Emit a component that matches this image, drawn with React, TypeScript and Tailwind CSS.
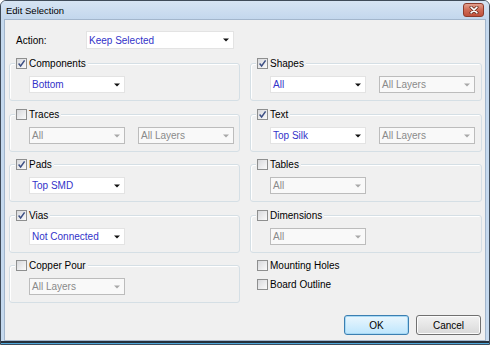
import React from "react";

const Check = ({ on }: { on?: boolean }) => (
  <span className="flex h-[11px] w-[11px] shrink-0 items-center justify-center border border-[#8e8f8f] bg-gradient-to-br from-[#d8d9dc] to-[#fafafa]">
    {on && (
      <svg width="9" height="9" viewBox="0 0 9 9">
        <path d="M1.6 4.6 L3.6 7 L7.6 1.4" fill="none" stroke="#3c4f84" strokeWidth="1.5" />
      </svg>
    )}
  </span>
);

const Combo = ({ value, off, wide }: { value: string; off?: boolean; wide?: boolean }) => (
  <div
    className={`flex h-[17px] items-center justify-between border pl-[2px] pr-[4px] ${wide ? "h-[18px] w-[148px]" : "w-[96px]"} ${
      off ? "border-[#bcbcbc] bg-[#f9f9f9] text-[#8a8a8a]" : "border-[#e3e3e3] bg-white text-[#3333c9]"
    }`}
  >
    <span>{value}</span>
    <svg width="6" height="4" viewBox="0 0 6 4">
      <path d="M0 0.5h6L3 3.5z" fill={off ? "#a8a8a8" : "#111"} />
    </svg>
  </div>
);

const Group = ({ label, on, push, children }: { label: string; on?: boolean; push?: boolean; children: React.ReactNode }) => (
  <div
    className={`relative h-[38px] rounded-[3px] border border-[#d5dfe5] pl-[19px] pt-[12px] shadow-[inset_1px_1px_0_#fff] ${push ? "mt-[1px]" : ""}`}
  >
    <div className="absolute -top-[6px] left-[5px] flex h-[11px] items-center gap-[2px] bg-[#f0f0f0] pl-[1px] pr-[2px]">
      <Check on={on} />
      <span>{label}</span>
    </div>
    <div className="flex gap-[13px]">{children}</div>
  </div>
);

const Row = ({ label }: { label: string }) => (
  <div className="flex h-[19px] items-center gap-[2px] pl-[7px]">
    <Check />
    <span>{label}</span>
  </div>
);

export default function App() {
  return (
    <div
      className="flex h-[345px] w-[490px] flex-col overflow-hidden rounded-t-[6px] border border-[#3f4b59] bg-[#c5d9ee] text-[10px] leading-[11px] text-black"
      style={{ fontFamily: '"Liberation Sans", Arial, sans-serif' }}
    >
      {/* title bar */}
      <div className="flex h-[18px] shrink-0 items-center justify-between bg-gradient-to-b from-[#d6e4f3] to-[#c3d7ed] pl-[5px] pr-[5px]">
        <span className="text-[9.5px]">Edit Selection</span>
        <div className="flex h-[14px] w-[21px] items-center justify-center rounded-[3px] border border-[#8c3b2c] bg-gradient-to-b from-[#e3a08f] via-[#cf6a55] to-[#c0503b]">
          <svg width="10" height="8" viewBox="0 0 10 8">
            <path d="M2 1.2 L8 6.8 M8 1.2 L2 6.8" stroke="#5a2418" strokeWidth="3" strokeLinecap="round" />
            <path d="M2 1.2 L8 6.8 M8 1.2 L2 6.8" stroke="#fff" strokeWidth="1.6" strokeLinecap="round" />
          </svg>
        </div>
      </div>

      {/* client */}
      <div className="mx-[3px] flex flex-1 flex-col border border-[#a3b6cc] bg-[#f0f0f0] pl-[4px] pr-[3px] pt-[11px] pb-[5px]">
        <div className="flex h-[18px] items-center pl-[7px]">
          <span className="w-[70px]">Action:</span>
          <Combo value="Keep Selected" wide />
        </div>

        <div className="mt-[14px] flex gap-[10px]">
          <div className="flex w-[231px] flex-col gap-[12px]">
            <Group label="Components" on>
              <Combo value="Bottom" />
            </Group>
            <Group label="Traces" push>
              <Combo value="All" off />
              <Combo value="All Layers" off />
            </Group>
            <Group label="Pads" on>
              <Combo value="Top SMD" />
            </Group>
            <Group label="Vias" on push>
              <Combo value="Not Connected" />
            </Group>
            <Group label="Copper Pour">
              <Combo value="All Layers" off />
            </Group>
          </div>

          <div className="flex w-[232px] flex-col">
            <div className="flex flex-col gap-[12px]">
              <Group label="Shapes" on>
                <Combo value="All" />
                <Combo value="All Layers" off />
              </Group>
              <Group label="Text" on push>
                <Combo value="Top Silk" />
                <Combo value="All Layers" off />
              </Group>
              <Group label="Tables">
                <Combo value="All" off />
              </Group>
              <Group label="Dimensions" push>
                <Combo value="All" off />
              </Group>
            </div>
            <div className="mt-[3px] flex flex-col">
              <Row label="Mounting Holes" />
              <Row label="Board Outline" />
            </div>
          </div>
        </div>

        <div className="mt-auto flex justify-end gap-[7px] pr-[1px]">
          <button className="h-[20px] w-[65px] rounded-[3px] border border-[#3c7fb1] bg-gradient-to-b from-[#eaf6fd] to-[#bee6fd] shadow-[inset_0_0_0_1px_#a7d9f5]">
            OK
          </button>
          <button className="h-[20px] w-[65px] rounded-[3px] border border-[#707070] bg-gradient-to-b from-[#f2f2f2] to-[#d9d9d9] shadow-[inset_0_0_0_1px_#fcfcfc]">
            Cancel
          </button>
        </div>
      </div>
      <div className="h-[2px] shrink-0 bg-[#26303c]" />
      <div className="h-[1px] shrink-0 bg-[#4fa8dc]" />
    </div>
  );
}
